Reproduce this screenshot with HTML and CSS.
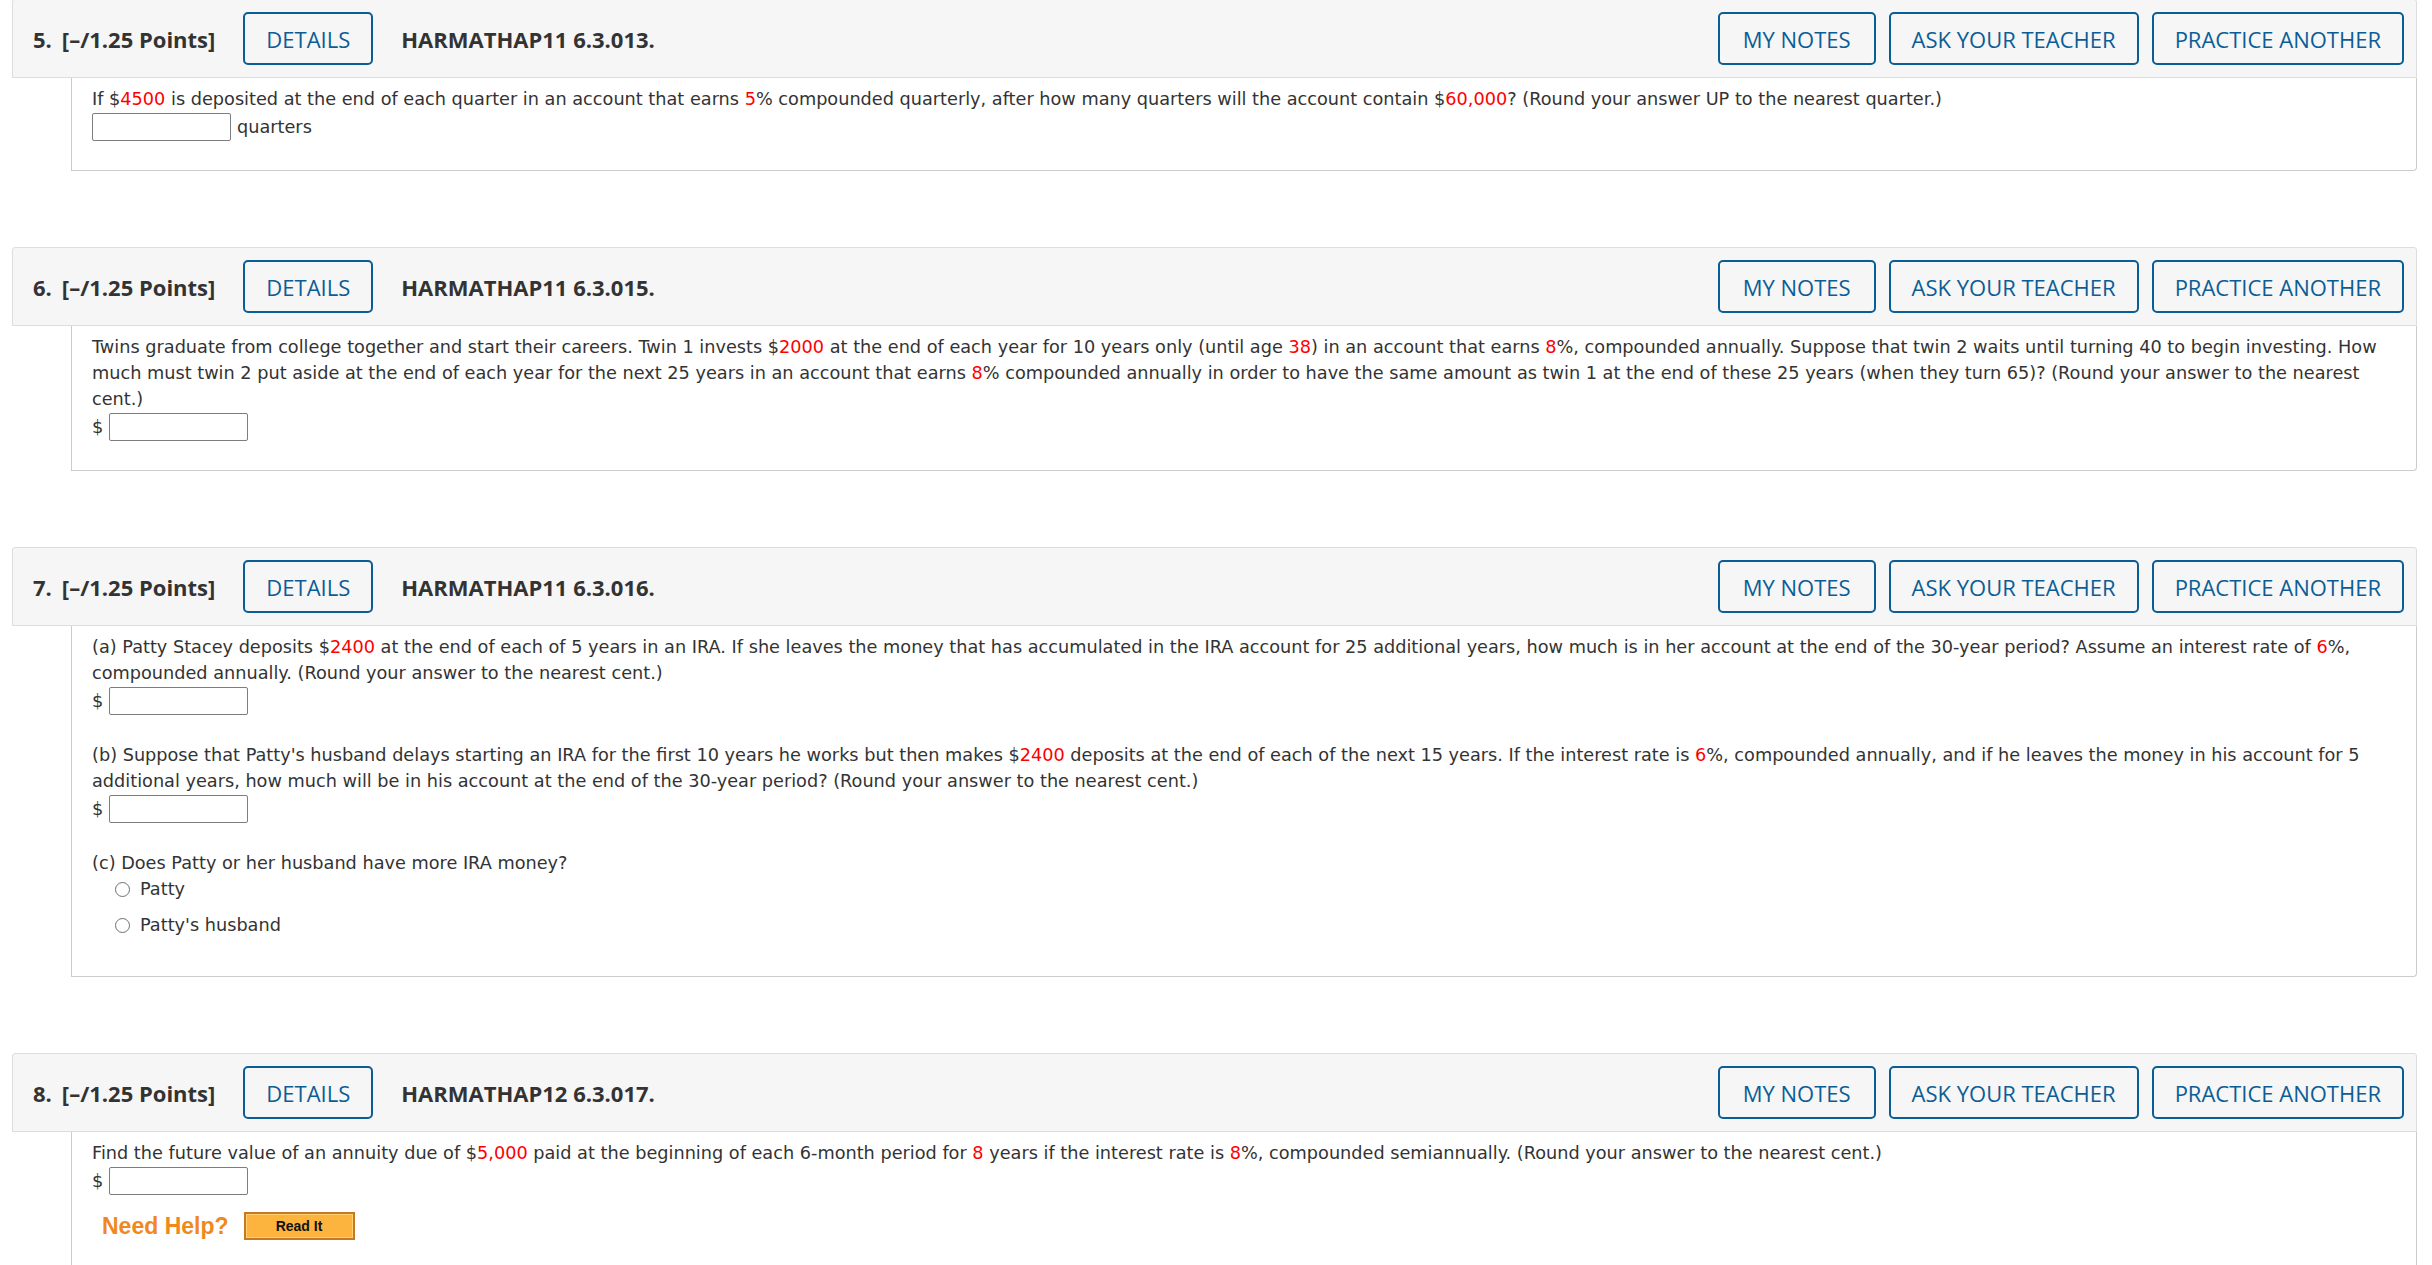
FILE: index.html
```html
<!DOCTYPE html>
<html lang="en">
<head>
<meta charset="utf-8">
<title>Questions</title>
<link rel="stylesheet" href="styles.css">
</head>
<body>
<div class="page">

  <section class="question first">
    <div class="qhead">
      <span class="qnum">5.</span><span class="qpts">[–/1.25 Points]</span>
      <button class="btn">DETAILS</button>
      <span class="qid">HARMATHAP11 6.3.013.</span>
      <div class="qactions">
        <button class="btn">MY NOTES</button>
        <button class="btn">ASK YOUR TEACHER</button>
        <button class="btn">PRACTICE ANOTHER</button>
      </div>
    </div>
    <div class="qbody">
      <p class="txt">If $<span class="r">4500</span> is deposited at the end of each quarter in an account that earns <span class="r">5</span>% compounded quarterly, after how many quarters will the account contain $<span class="r">60,000</span>? (Round your answer UP to the nearest quarter.)</p>
      <div class="ans"><input class="box" type="text"><span class="unit">quarters</span></div>
    </div>
  </section>

  <section class="question">
    <div class="qhead">
      <span class="qnum">6.</span><span class="qpts">[–/1.25 Points]</span>
      <button class="btn">DETAILS</button>
      <span class="qid">HARMATHAP11 6.3.015.</span>
      <div class="qactions">
        <button class="btn">MY NOTES</button>
        <button class="btn">ASK YOUR TEACHER</button>
        <button class="btn">PRACTICE ANOTHER</button>
      </div>
    </div>
    <div class="qbody">
      <p class="txt">Twins graduate from college together and start their careers. Twin 1 invests $<span class="r">2000</span> at the end of each year for 10 years only (until age <span class="r">38</span>) in an account that earns <span class="r">8</span>%, compounded annually. Suppose that twin 2 waits until turning 40 to begin investing. How much must twin 2 put aside at the end of each year for the next 25 years in an account that earns <span class="r">8</span>% compounded annually in order to have the same amount as twin 1 at the end of these 25 years (when they turn 65)? (Round your answer to the nearest cent.)</p>
      <div class="ans"><span class="cur">$</span><input class="box" type="text"></div>
    </div>
  </section>

  <section class="question">
    <div class="qhead">
      <span class="qnum">7.</span><span class="qpts">[–/1.25 Points]</span>
      <button class="btn">DETAILS</button>
      <span class="qid">HARMATHAP11 6.3.016.</span>
      <div class="qactions">
        <button class="btn">MY NOTES</button>
        <button class="btn">ASK YOUR TEACHER</button>
        <button class="btn">PRACTICE ANOTHER</button>
      </div>
    </div>
    <div class="qbody tall">
      <div class="part">
        <p class="txt">(a) Patty Stacey deposits $<span class="r">2400</span> at the end of each of 5 years in an IRA. If she leaves the money that has accumulated in the IRA account for 25 additional years, how much is in her account at the end of the 30-year period? Assume an interest rate of <span class="r">6</span>%, compounded annually. (Round your answer to the nearest cent.)</p>
        <div class="ans"><span class="cur">$</span><input class="box" type="text"></div>
      </div>
      <div class="part">
        <p class="txt">(b) Suppose that Patty's husband delays starting an IRA for the first 10 years he works but then makes $<span class="r">2400</span> deposits at the end of each of the next 15 years. If the interest rate is <span class="r">6</span>%, compounded annually, and if he leaves the money in his account for 5 additional years, how much will be in his account at the end of the 30-year period? (Round your answer to the nearest cent.)</p>
        <div class="ans"><span class="cur">$</span><input class="box" type="text"></div>
      </div>
      <div class="part">
        <p class="txt">(c) Does Patty or her husband have more IRA money?</p>
        <label class="opt"><input class="radio" type="radio" name="q7c"><span>Patty</span></label>
        <label class="opt"><input class="radio" type="radio" name="q7c"><span>Patty's husband</span></label>
      </div>
    </div>
  </section>

  <section class="question">
    <div class="qhead">
      <span class="qnum">8.</span><span class="qpts">[–/1.25 Points]</span>
      <button class="btn">DETAILS</button>
      <span class="qid">HARMATHAP12 6.3.017.</span>
      <div class="qactions">
        <button class="btn">MY NOTES</button>
        <button class="btn">ASK YOUR TEACHER</button>
        <button class="btn">PRACTICE ANOTHER</button>
      </div>
    </div>
    <div class="qbody">
      <p class="txt">Find the future value of an annuity due of $<span class="r">5,000</span> paid at the beginning of each 6-month period for <span class="r">8</span> years if the interest rate is <span class="r">8</span>%, compounded semiannually. (Round your answer to the nearest cent.)</p>
      <div class="ans"><span class="cur">$</span><input class="box" type="text"></div>
      <div class="help">
        <span class="need">Need Help?</span>
        <button class="readit">Read It</button>
      </div>
    </div>
  </section>

</div>
</body>
</html>
```

FILE: styles.css
```css
* { box-sizing: border-box; }

body {
  margin: 0;
  background: #ffffff;
  color: #333333;
  font-family: "DejaVu Sans", Verdana, sans-serif;
}

.page {
  padding: 0 15px 0 12px;
}

.question {
  margin-bottom: 76px;
}

.question.first {
  margin-top: -1px;
}

.qhead {
  display: flex;
  align-items: center;
  height: 79px;
  padding: 0 12px 0 20px;
  background: #f6f6f6;
  border: 1px solid #dddddd;
  border-radius: 3px 3px 0 0;
  font-family: "Open Sans", "Liberation Sans", sans-serif;
  font-size: 22px;
  color: #333333;
}

.qnum {
  font-weight: 700;
  margin-right: 10px;
}

.qpts {
  font-weight: 700;
  margin-right: 28px;
}

.qid {
  font-weight: 700;
  margin-left: 28px;
}

.btn {
  height: 53px;
  padding: 0 21px;
  border: 2px solid #0b5d96;
  border-radius: 5px;
  background: transparent;
  color: #0b5d96;
  font-family: "Open Sans", "Liberation Sans", sans-serif;
  font-size: 22px;
  font-weight: 400;
  cursor: pointer;
}

.qactions {
  margin-left: auto;
  display: flex;
  gap: 13px;
}

.qactions .btn:first-child {
  padding: 0 23px;
}

.qbody {
  margin-left: 59px;
  padding: 8px 20px 28px 20px;
  border: 1px solid #cccccc;
  border-top: none;
  border-radius: 0 0 4px 0;
  font-size: 17.7px;
  line-height: 26px;
}

.qbody.tall {
  padding-bottom: 38px;
}

.txt {
  margin: 0;
}

.r {
  color: #ff0000;
}

.ans {
  display: flex;
  align-items: center;
  height: 30px;
}

.cur {
  margin-right: 6px;
}

.unit {
  margin-left: 6px;
}

.box {
  width: 139px;
  height: 28px;
  border: 1px solid #7d7d7d;
  border-radius: 2px;
  background: #ffffff;
  margin: 0;
}

.part + .part {
  margin-top: 26px;
}

.opt {
  display: flex;
  align-items: center;
  height: 26px;
  padding-left: 23px;
}

.opt + .opt {
  margin-top: 10px;
}

.radio {
  appearance: none;
  -webkit-appearance: none;
  width: 15px;
  height: 15px;
  margin: 0 10px 0 0;
  border: 1.5px solid #6f6f6f;
  border-radius: 50%;
  background: #ffffff;
}

.help {
  display: flex;
  align-items: center;
  height: 28px;
  margin-top: 16px;
  padding-left: 10px;
  gap: 15px;
}

.need {
  font-family: "Liberation Sans", Arial, sans-serif;
  font-weight: 700;
  font-size: 23px;
  color: #f0891d;
}

.readit {
  width: 111px;
  height: 28px;
  padding: 0;
  border: 2px solid #c57a22;
  background: #fdb43f;
  box-shadow: inset 0 0 0 1px #ffcf72;
  font-family: "Liberation Sans", Arial, sans-serif;
  font-weight: 700;
  font-size: 14px;
  color: #111111;
}
```
